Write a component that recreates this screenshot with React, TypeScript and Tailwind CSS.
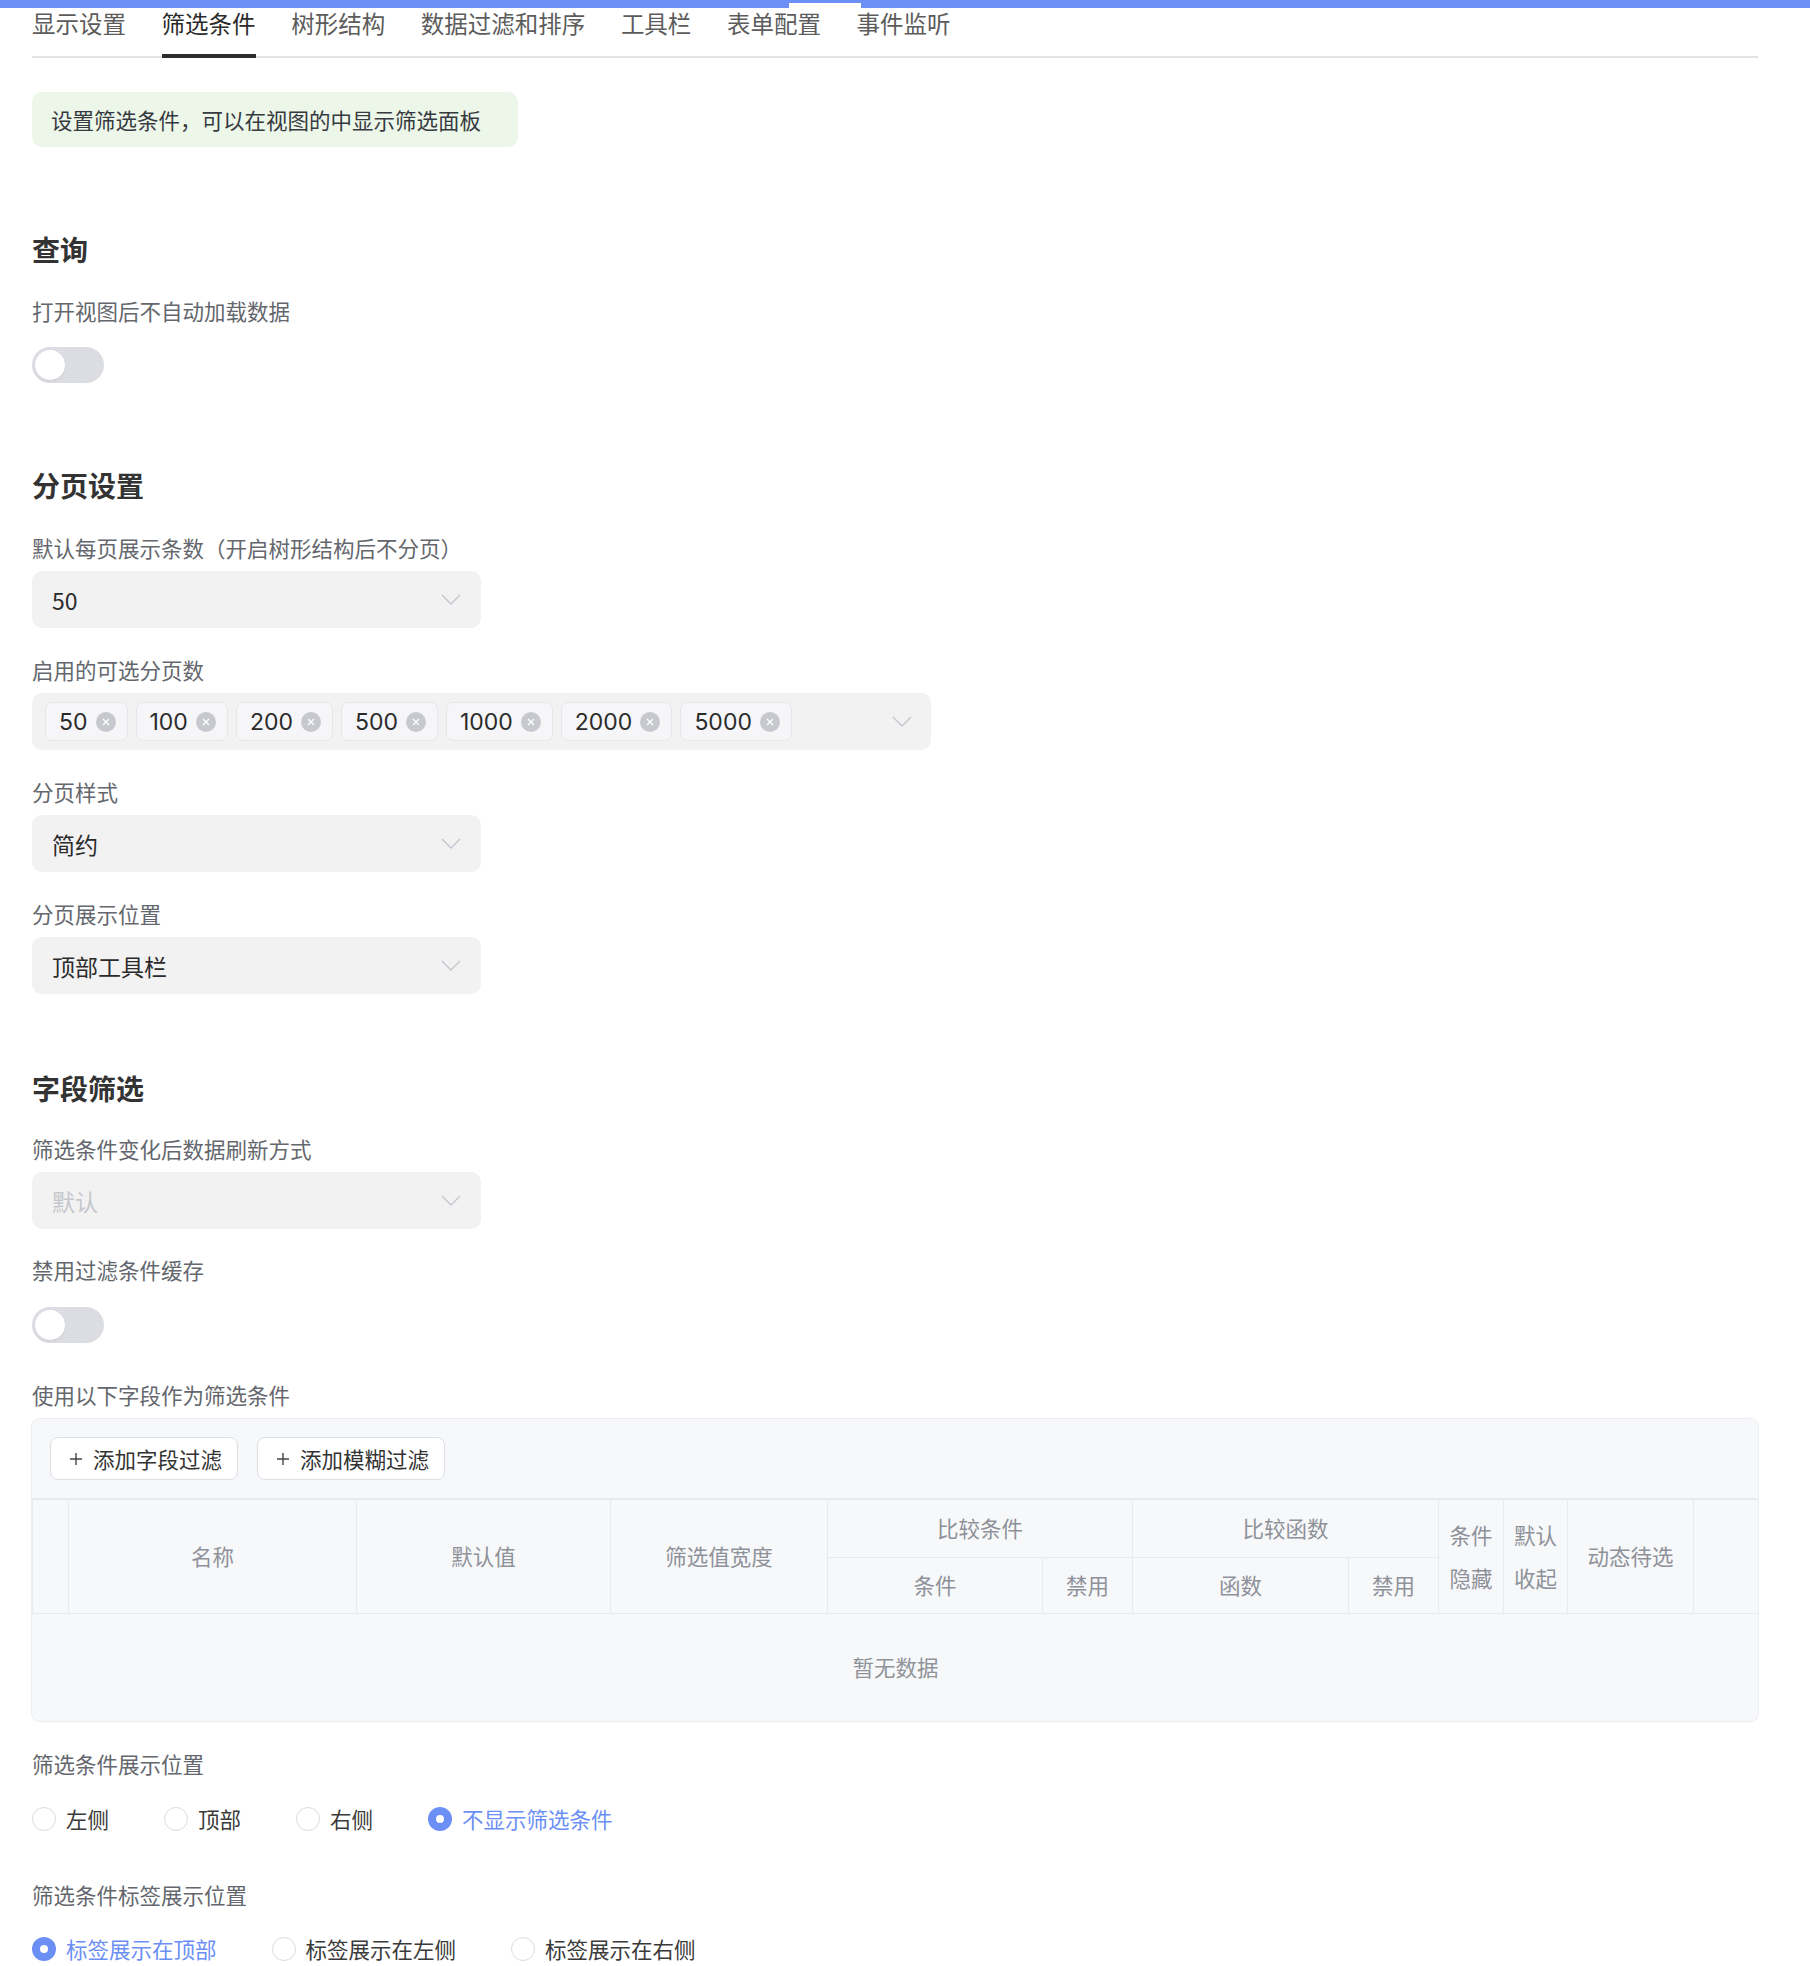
import React from 'react';

const TABS = ['显示设置', '筛选条件', '树形结构', '数据过滤和排序', '工具栏', '表单配置', '事件监听'];
const PAGE_SIZES = ['50', '100', '200', '500', '1000', '2000', '5000'];

function Chevron() {
  return (
    <svg width="20" height="11" viewBox="0 0 20 11" fill="none">
      <path d="M1 1l9 9 9-9" stroke="#c4c7cf" strokeWidth="1.4" />
    </svg>
  );
}

function Toggle() {
  return (
    <div className="w-[72px] h-[36px] rounded-full bg-[#dcdde2] p-[3px]">
      <div className="w-[30px] h-[30px] rounded-full bg-white shadow-[0_1px_2px_rgba(0,0,0,0.08)]" />
    </div>
  );
}

function Heading({ children, className = '' }: { children: React.ReactNode; className?: string }) {
  return <h2 className={`text-[28px] leading-[40px] font-semibold text-[#333333] ${className}`}>{children}</h2>;
}

function Label({ children, className = '' }: { children: React.ReactNode; className?: string }) {
  return <div className={`text-[21.5px] leading-[30px] text-[#64676d] ${className}`}>{children}</div>;
}

function Select({ value, disabled = false }: { value: string; disabled?: boolean }) {
  return (
    <div className="mt-[8px] w-[449px] h-[57px] rounded-[10px] bg-[#f2f2f3] px-[20px] flex items-center justify-between">
      <span className={`text-[23px] leading-[30px] ${disabled ? 'text-[#c5c7cc]' : 'text-[#2b2b2b]'}`}>{value}</span>
      <Chevron />
    </div>
  );
}

function Tag({ value }: { value: string }) {
  return (
    <div className="h-[39px] rounded-[7px] bg-[#f6f6f8] border border-[#e6e7eb] pl-[13px] pr-[11px] flex items-center gap-[8px]">
      <span className="font-['Inter',sans-serif] text-[23px] leading-[30px] text-[#2b2b2b]">{value}</span>
      <span className="w-[20px] h-[20px] rounded-full bg-[#c7c9cf] flex items-center justify-center">
        <svg width="10" height="10" viewBox="0 0 10 10">
          <path d="M2 2l6 6M8 2l-6 6" stroke="#ffffff" strokeWidth="1.3" />
        </svg>
      </span>
    </div>
  );
}

function Radio({ label, checked = false }: { label: string; checked?: boolean }) {
  return (
    <div className="flex items-center gap-[10px]">
      {checked ? (
        <span className="w-[24px] h-[24px] rounded-full bg-[#6b8ff5] flex items-center justify-center">
          <span className="w-[8px] h-[8px] rounded-full bg-white" />
        </span>
      ) : (
        <span className="w-[24px] h-[24px] rounded-full border border-[#d9dce2] bg-white" />
      )}
      <span className={`text-[21.5px] leading-[30px] ${checked ? 'text-[#6b8ff5]' : 'text-[#3a3a3a]'}`}>{label}</span>
    </div>
  );
}

function AddButton({ label }: { label: string }) {
  return (
    <button className="h-[43px] pl-[18px] pr-[15px] bg-white border border-[#dcdfe5] rounded-[8px] flex items-center gap-[10px] text-[21.5px] leading-[30px] text-[#333333]">
      <svg width="14" height="14" viewBox="0 0 14 14">
        <path d="M7 1v12M1 7h12" stroke="#444444" strokeWidth="1.4" />
      </svg>
      {label}
    </button>
  );
}

const th = 'border border-[#e8eaee] font-normal text-[#8e9199] text-[21.5px] text-center align-middle';

export default function App() {
  return (
    <div className="min-h-[1966px] w-full bg-white font-['Noto_Sans_CJK_SC','Noto_Sans',sans-serif]">
      {/* top bar */}
      <div className="relative h-[8px] bg-[#6b8ff5]">
        <div className="absolute left-[789px] top-[3px] w-[72px] h-[5px] bg-white" />
      </div>

      <div className="pl-[32px] pr-[52px]">
        {/* Tabs */}
        <div className="flex gap-[35.6px] h-[50px] border-b-2 border-[#e4e4e8]">
          {TABS.map((t, i) => (
            <div key={t} className="relative h-full">
              <span className={`text-[23.5px] leading-[30px] ${i === 1 ? 'text-[#2b2b2b]' : 'text-[#5c5c5c]'}`}>{t}</span>
              {i === 1 && <div className="absolute left-0 right-0 bottom-[-2px] h-[4px] bg-[#2e2e2e]" />}
            </div>
          ))}
        </div>

        {/* Tip */}
        <div className="mt-[34px] w-[486px] h-[55px] rounded-[10px] bg-[#edf7e9] px-[19px] flex items-center text-[21.5px] leading-[30px] text-[#363a40]">
          设置筛选条件，可以在视图的中显示筛选面板
        </div>

        {/* 查询 */}
        <Heading className="mt-[82px]">查询</Heading>
        <Label className="mt-[27px]">打开视图后不自动加载数据</Label>
        <div className="mt-[21px]">
          <Toggle />
        </div>

        {/* 分页设置 */}
        <Heading className="mt-[82px]">分页设置</Heading>
        <Label className="mt-[28px]">默认每页展示条数（开启树形结构后不分页）</Label>
        <Select value="50" />

        <Label className="mt-[27px]">启用的可选分页数</Label>
        <div className="mt-[8px] w-[899px] h-[57px] rounded-[10px] bg-[#f2f2f3] pl-[13px] pr-[19px] flex items-center justify-between">
          <div className="flex gap-[8px]">
            {PAGE_SIZES.map((s) => (
              <Tag key={s} value={s} />
            ))}
          </div>
          <Chevron />
        </div>

        <Label className="mt-[27px]">分页样式</Label>
        <Select value="简约" />

        <Label className="mt-[27px]">分页展示位置</Label>
        <Select value="顶部工具栏" />

        {/* 字段筛选 */}
        <Heading className="mt-[74px]">字段筛选</Heading>
        <Label className="mt-[26px]">筛选条件变化后数据刷新方式</Label>
        <Select value="默认" disabled />

        <Label className="mt-[26px]">禁用过滤条件缓存</Label>
        <div className="mt-[22px]">
          <Toggle />
        </div>

        <Label className="mt-[37px]">使用以下字段作为筛选条件</Label>
        <div className="mt-[9px] rounded-[8px] bg-[#f7f8fa] overflow-hidden shadow-[0_0_0_1px_#eceef2,0_1px_2px_rgba(0,0,0,0.05)]">
          <div className="flex gap-[19px] pl-[18px] pt-[18px] pb-[18px]">
            <AddButton label="添加字段过滤" />
            <AddButton label="添加模糊过滤" />
          </div>
          <table className="w-full table-fixed border-collapse">
            <colgroup>
              <col className="w-[36px]" />
              <col className="w-[288px]" />
              <col className="w-[254px]" />
              <col className="w-[217px]" />
              <col className="w-[215px]" />
              <col className="w-[90px]" />
              <col className="w-[216px]" />
              <col className="w-[90px]" />
              <col className="w-[65px]" />
              <col className="w-[64px]" />
              <col className="w-[126px]" />
              <col className="w-[65px]" />
            </colgroup>
            <thead>
              <tr className="h-[58px] border-t-2 border-[#e8eaee]">
                <th rowSpan={2} className={th}></th>
                <th rowSpan={2} className={th}>名称</th>
                <th rowSpan={2} className={th}>默认值</th>
                <th rowSpan={2} className={th}>筛选值宽度</th>
                <th colSpan={2} className={th}>比较条件</th>
                <th colSpan={2} className={th}>比较函数</th>
                <th rowSpan={2} className={`${th} px-[10px] leading-[43px]`}>条件隐藏</th>
                <th rowSpan={2} className={`${th} px-[10px] leading-[43px]`}>默认收起</th>
                <th rowSpan={2} className={th}>动态待选</th>
                <th rowSpan={2} className={th}></th>
              </tr>
              <tr className="h-[56px]">
                <th className={th}>条件</th>
                <th className={th}>禁用</th>
                <th className={th}>函数</th>
                <th className={th}>禁用</th>
              </tr>
            </thead>
            <tbody>
              <tr>
                <td colSpan={12} className="h-[108px] text-center text-[21.5px] text-[#909399] border-t border-[#e8eaee]">
                  暂无数据
                </td>
              </tr>
            </tbody>
          </table>
        </div>

        <Label className="mt-[28px]">筛选条件展示位置</Label>
        <div className="mt-[25px] flex gap-[55px]">
          <Radio label="左侧" />
          <Radio label="顶部" />
          <Radio label="右侧" />
          <Radio label="不显示筛选条件" checked />
        </div>

        <Label className="mt-[46px]">筛选条件标签展示位置</Label>
        <div className="mt-[24px] flex gap-[55px]">
          <Radio label="标签展示在顶部" checked />
          <Radio label="标签展示在左侧" />
          <Radio label="标签展示在右侧" />
        </div>
      </div>
    </div>
  );
}
